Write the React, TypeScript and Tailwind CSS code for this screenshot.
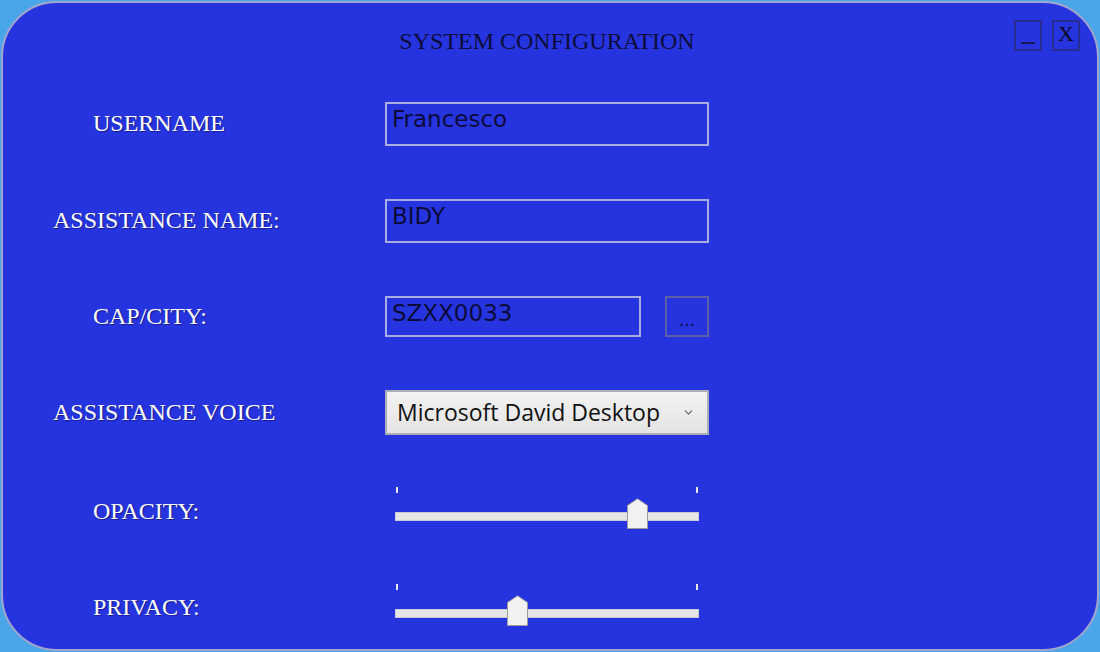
import React from "react";
import { ChevronDown } from "lucide-react";

const serif = "font-['Liberation_Serif','Times_New_Roman',serif]";
const sans = "font-['Open_Sans','Noto_Sans',sans-serif]";
const verd = "font-['DejaVu_Sans','Verdana',sans-serif]";
const labelCls = `${serif} text-[24px] text-white leading-none [text-shadow:1px_1px_1px_rgba(0,0,40,0.45)]`;

function Label({ text, pl }: { text: string; pl: string }) {
  return (
    <div className={`w-[382px] shrink-0 ${pl}`}>
      <span className={labelCls}>{text}</span>
    </div>
  );
}

function TextBox({ value, w, h }: { value: string; w: string; h: string }) {
  return (
    <div className={`${w} ${h} border-2 border-[#a9aee2] pl-[5px] pt-[1px] ${verd} text-[23px] leading-[28px] text-[#0b0b3a]`}>
      {value}
    </div>
  );
}

function Slider({ value }: { value: number }) {
  const left = Math.round(value * (304 - 21));
  return (
    <div className="relative -mt-[4px] ml-[10px] h-[42px] w-[304px]">
      <div className="flex justify-between px-[1px]">
        <div className="h-[6px] w-[2px] bg-[#e8e8f0]" />
        <div className="h-[6px] w-[2px] bg-[#e8e8f0]" />
      </div>
      <div className="absolute left-0 right-0 top-[25px] h-[9px] border border-[#c9cad8] bg-[#e6e6e6]" />
      <svg
        className="absolute top-[11px]"
        style={{ left }}
        width="21"
        height="31"
        viewBox="0 0 21 31"
      >
        <polygon
          points="0.5,7.5 10.5,0.8 20.5,7.5 20.5,30.5 0.5,30.5"
          fill="#f1f1f1"
          stroke="#9c9c9c"
          strokeWidth="1"
        />
      </svg>
    </div>
  );
}

export default function App() {
  return (
    <div className="h-[652px] w-[1100px] overflow-hidden bg-[#4aa6e8] p-[1px]">
      <div className="flex h-full w-full flex-col overflow-hidden rounded-[56px] border-2 border-[#a3a6cc] bg-[#2634e0]">
        {/* header */}
        <div className="relative flex h-[72px] shrink-0 items-start justify-center pt-[26px]">
          <span className={`${serif} text-[24px] leading-none text-[#0c0c38] -ml-[6px]`}>SYSTEM CONFIGURATION</span>
          <div className="absolute right-[17px] top-[17px] flex gap-[10px]">
            <div className="flex h-[31px] w-[28px] items-end justify-center border-2 border-[#262c92]">
              <span className="mb-[5px] block h-[2px] w-[14px] bg-[#161a55]" />
            </div>
            <div className={`flex h-[31px] w-[28px] items-start justify-center border-2 border-[#262c92] pt-[1px] ${serif} text-[22px] leading-none text-[#0a0a20]`}>
              X
            </div>
          </div>
        </div>

        {/* rows */}
        <div className="flex h-[97px] shrink-0 items-center">
          <Label text="USERNAME" pl="pl-[90px]" />
          <TextBox value="Francesco" w="w-[324px]" h="h-[44px]" />
        </div>
        <div className="flex h-[97px] shrink-0 items-center">
          <Label text="ASSISTANCE NAME:" pl="pl-[50px]" />
          <TextBox value="BIDY" w="w-[324px]" h="h-[44px]" />
        </div>
        <div className="flex h-[95px] shrink-0 items-center">
          <Label text="CAP/CITY:" pl="pl-[90px]" />
          <div className="flex gap-[24px]">
            <TextBox value="SZXX0033" w="w-[256px]" h="h-[41px]" />
            <div className={`flex h-[41px] w-[44px] items-end justify-center border-2 border-[#5a5fa6] pb-[6px] ${verd} text-[17px] leading-none text-[#0b0b3a]`}>
              ...
            </div>
          </div>
        </div>
        <div className="flex h-[97px] shrink-0 items-center">
          <Label text="ASSISTANCE VOICE" pl="pl-[50px]" />
          <div className={`flex h-[45px] w-[324px] items-center justify-between border-2 border-[#adadb5] bg-gradient-to-b from-[#f3f3f3] to-[#e4e4e4] pl-[10px] pr-[12px] ${sans} text-[23px] leading-none text-[#111]`}>
            <span>Microsoft David Desktop</span>
            <ChevronDown size={13} strokeWidth={2} color="#666" />
          </div>
        </div>
        <div className="flex h-[97px] shrink-0 items-center">
          <Label text="OPACITY:" pl="pl-[90px] pt-[5px]" />
          <Slider value={0.82} />
        </div>
        <div className="flex h-[97px] shrink-0 items-center">
          <Label text="PRIVACY:" pl="pl-[90px] pt-[3px]" />
          <Slider value={0.395} />
        </div>
      </div>
    </div>
  );
}
